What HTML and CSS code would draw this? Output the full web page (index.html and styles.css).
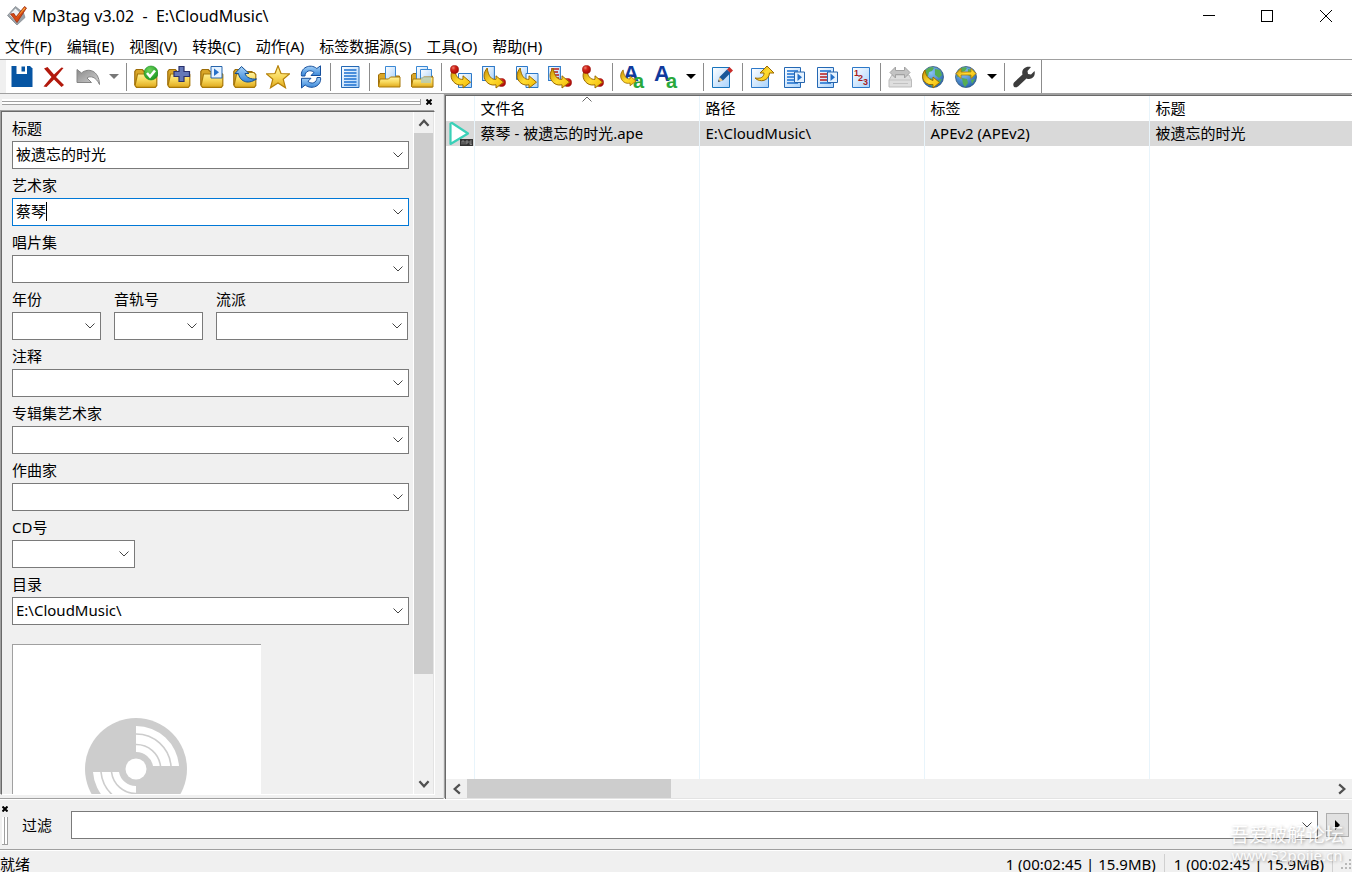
FILE: index.html
```html
<!DOCTYPE html>
<html lang="zh-CN">
<head>
<meta charset="utf-8">
<title>Mp3tag v3.02  -  E:\CloudMusic\</title>
<link rel="stylesheet" href="styles.css">
</head>
<body>
<svg class="defs" aria-hidden="true">
  <defs>
    <linearGradient id="gold" x1="0" y1="0" x2="0" y2="1"><stop offset="0" stop-color="#fff3a0"/><stop offset=".5" stop-color="#f8d95c"/><stop offset="1" stop-color="#dfa91c"/></linearGradient>
    <linearGradient id="arrowgold" x1="0" y1="0" x2="1" y2="1"><stop offset="0" stop-color="#c88f00"/><stop offset=".5" stop-color="#ffdc32"/><stop offset="1" stop-color="#f2b800"/></linearGradient>
    <linearGradient id="sky" x1="0" y1="0" x2="1" y2="1"><stop offset="0" stop-color="#fff"/><stop offset="1" stop-color="#a9d2fb"/></linearGradient>
    <linearGradient id="azure" x1="0" y1="0" x2="0" y2="1"><stop offset="0" stop-color="#a6d2f8"/><stop offset="1" stop-color="#3584d8"/></linearGradient>
    <linearGradient id="gray" x1="0" y1="0" x2="1" y2="1"><stop offset="0" stop-color="#8a8a8a"/><stop offset="1" stop-color="#d4d4d4"/></linearGradient>
    <radialGradient id="red" cx=".35" cy=".3" r=".7"><stop offset="0" stop-color="#f08070"/><stop offset=".4" stop-color="#d22418"/><stop offset="1" stop-color="#a80c08"/></radialGradient>
    <radialGradient id="green" cx=".4" cy=".3" r=".8"><stop offset="0" stop-color="#6cd45c"/><stop offset="1" stop-color="#12901a"/></radialGradient>
    <radialGradient id="ocean" cx=".4" cy=".3" r=".8"><stop offset="0" stop-color="#8ac4f4"/><stop offset="1" stop-color="#1c5aa8"/></radialGradient>
  </defs>
  <symbol id="folder" viewBox="0 0 24 24">
    <path d="M.8 20V6.500l1.500-2h6l1.800 2H19v4" fill="#d9a628" stroke="#9c6c08" stroke-width="1.200"/>
    <path d="M1 20.500 3.500 9h7l1.800-1.500H21l1.800 2V20.500l-1.500 1.800H2.500Z" fill="url(#gold)" stroke="#a87808" stroke-width="1.200"/>
  </symbol>
  <symbol id="bend" viewBox="0 0 24 24">
    <path d="M5.200 3C1 8 .8 14 6 18.200 9 20.300 11.500 20.200 14 19.800V23L21.500 17.200 14 10.800v3.500C9.500 15 6.200 11 5.200 3Z" fill="url(#arrowgold)" stroke="#9b6a00" stroke-width="1"/>
  </symbol>
  <symbol id="sheet" viewBox="0 0 12 14"><path d="M.5.5h11v13H.5Z" fill="url(#sky)" stroke="#2c78c8"/></symbol>
  <symbol id="ball" viewBox="0 0 10 10"><circle cx="5" cy="5" r="4.500" fill="url(#red)" stroke="#980c08" stroke-width=".6"/></symbol>
  <symbol id="earth" viewBox="0 0 24 24">
    <circle cx="12" cy="12" r="10.500" fill="url(#ocean)" stroke="#345878" stroke-width=".8"/>
    <path d="M4 6c4-5 8-4 9-3l-2 3-3 1-1 4-4 1ZM14 4l5 1 2 5-3 3-4-3ZM8 13l5 1 1 4-3 4-2-3ZM17 15l4-1-3 5Z" fill="#55ad53"/>
  </symbol>
</svg>

<div class="app">
  <header class="titlebar">
    <svg class="logo" viewBox="0 0 22 22" aria-hidden="true">
      <path d="M9.500 1.500 17.500 8 19 12.500 11 20 1.500 10.500Z" fill="#9aa2a8" stroke="#858a90" stroke-width=".8"/>
      <path d="M9.500 3.500 15.500 9.500 9.500 16 3.500 9.800Z" fill="#eef2f4"/>
      <path d="M4.500 9 8 8.500 10 12 18.500 1.500 20.500 3 11 17.500Z" fill="#d84a12" stroke="#9c2c10" stroke-width=".8"/>
      <path d="M10.300 13 18.500 2.600 19.500 3.200Z" fill="#ffb33c"/>
    </svg>
    <h1 class="title">Mp3tag v3.02&nbsp; -&nbsp; E:\CloudMusic\</h1>
    <div class="window-controls">
      <button aria-label="最小化"><svg viewBox="0 0 12 12"><path d="M0 5.500h12"/></svg></button>
      <button aria-label="最大化"><svg viewBox="0 0 12 12"><path d="M.5.5h11v11H.5Z"/></svg></button>
      <button aria-label="关闭"><svg viewBox="0 0 12 12"><path d="m0 0 12 12M12 0 0 12"/></svg></button>
    </div>
  </header>

  <nav class="menubar">
    <button>文件(F)</button><button>编辑(E)</button><button>视图(V)</button><button>转换(C)</button><button>动作(A)</button><button>标签数据源(S)</button><button>工具(O)</button><button>帮助(H)</button>
  </nav>

  <div class="toolbar" role="toolbar">
    <button class="tool" aria-label="保存标签"><svg viewBox="0 0 24 24"><path d="M1.500 1H20l2.500 2.500V22h-21Z" fill="#0655a3"/><path d="M6.500 1h10.500v8H6.500Z" fill="#fff"/><path d="M11.500 1.500h3.500v5h-3.500Z" fill="#0655a3"/></svg></button>
    <button class="tool" aria-label="移除标签"><svg viewBox="0 0 24 24"><path d="M1 3.500 4.500 2 11 9.500 18.500 2.500 20.500 3 13 12l8 8-2.500 2L11 14.500 3.500 22 .5 21.500 8.500 12Z" fill="#b2190c"/></svg></button>
    <button class="tool" aria-label="撤消"><svg viewBox="0 0 24 24"><path d="M1 4.500 5.500 8C12 2.500 23 5 23.500 19.500 20 11.500 14 10.500 11 13l4.500 4.500H1Z" fill="url(#gray)" stroke="#858585"/></svg></button>
    <button class="drop muted" aria-label="撤消列表"><svg viewBox="0 0 10 5"><path d="M0 0h10L5 5Z"/></svg></button>
    <span class="sep"></span>
    <button class="tool" aria-label="更改目录"><svg viewBox="0 0 24 24"><use href="#folder"/><circle cx="17" cy="8" r="7" fill="url(#green)" stroke="#168b1c" stroke-width=".6"/><path d="m13 8 3 3.500 5-6" fill="none" stroke="#fff" stroke-width="2.600"/></svg></button>
    <button class="tool" aria-label="添加目录"><svg viewBox="0 0 24 24"><use href="#folder"/><path d="M12 1.500h5v5h5.500v5H17v5h-5v-5H7v-5h5Z" fill="#6478b8" stroke="#28306c" stroke-width="1.200"/></svg></button>
    <button class="tool" aria-label="载入播放列表"><svg viewBox="0 0 24 24"><use href="#folder"/><path d="M11 1.500h11v11.500H11Z" fill="#e6f3ff" stroke="#2664ac"/><path d="M14 3.500v7.500l5-3.750Z" fill="#2470c8"/></svg></button>
    <button class="tool" aria-label="上级目录"><svg viewBox="0 0 24 24"><use href="#folder"/><path d="M8.500 1.500 2 8.500h3.500C6.500 15.500 14 20.500 23.500 14 18 14.500 13 12.500 12 8.500h4Z" fill="url(#azure)" stroke="#114c90"/></svg></button>
    <button class="tool" aria-label="收藏目录"><svg viewBox="0 0 24 24"><path d="m12 .8 3 7.700 8.500.4-6.300 5.300 2.300 8.600L12 17.900 4.500 22.800l2.300-8.600L.5 8.900 9 8.500Z" fill="url(#gold)" stroke="#b68108" stroke-width="1.200"/></svg></button>
    <button class="tool" aria-label="刷新"><svg viewBox="0 0 24 24"><g fill="url(#azure)" stroke="#164f9c"><path d="M2.500 11C1 3 11-2 17.800 3.500L21.500.8v9.700H12l3-3C11.500 4 6 6 6 11Z"/><path d="M21.500 12.500c1.500 8-8.500 13-15.300 7.500l-3.700 3v-9.700H12l-3 3c3.500 3.500 9 1.500 9-3.800Z"/></g></svg></button>
    <span class="sep"></span>
    <button class="tool" aria-label="扩展标签"><svg viewBox="0 0 24 24"><path d="M3.500 1.500h17.500v21H3.500Z" fill="url(#sky)" stroke="#2468b4"/><path d="M6 5h12.500M6 8h12.500M6 11h12.500M6 14h12.500M6 17h12.500M6 20h12.500" stroke="#1c70d0" stroke-width="1.300"/></svg></button>
    <span class="sep"></span>
    <button class="tool" aria-label="全选文件"><svg viewBox="0 0 24 24"><path d="M1.500 21V10l1.500-1.500h5L10 11h12.500v10.500H2Z" fill="#d9a628" stroke="#9c6c08"/><path d="M8.500 1.500h10V15h-10Z" fill="url(#sky)" stroke="#3a88d4"/><path d="M1.500 21.500 3 14h8.500l2-2h9.500v10H2Z" fill="url(#gold)" stroke="#a87808"/></svg></button>
    <button class="tool" aria-label="子目录"><svg viewBox="0 0 24 24"><path d="M1.500 21.500V10l1.500-1.500h5L10 11h12.500v11H2Z" fill="#d9a628" stroke="#9c6c08"/><path d="M6.500 1.500h11V15h-11Z" fill="url(#sky)" stroke="#3a88d4"/><path d="M10.500 4.500h11V17h-11Z" fill="url(#sky)" stroke="#3a88d4"/><path d="M1.500 21.500 3 14h8.500l2-2h9.500v10H2Z" fill="url(#gold)" stroke="#a87808"/><path d="M11 12h10v6H11Z" fill="#a9c8c8" fill-opacity=".7"/></svg></button>
    <span class="sep"></span>
    <button class="tool" aria-label="标签 - 文件名"><svg viewBox="0 0 24 24"><path d="M9.500 8.500h13v14h-13Z" fill="url(#sky)" stroke="#2c78c8"/><use href="#bend"/><use href="#ball" x="1" y="0" width="9" height="9"/></svg></button>
    <button class="tool" aria-label="文件名 - 标签"><svg viewBox="0 0 24 24"><use href="#sheet" x="0" y="1" width="13" height="15"/><use href="#ball" x="15" y="13" width="9" height="9"/><use href="#bend"/></svg></button>
    <button class="tool" aria-label="文件名 - 文件名"><svg viewBox="0 0 24 24"><use href="#sheet" x="1" y="1" width="12" height="14"/><path d="M11 8.500h12v14H11Z" fill="url(#sky)" stroke="#2c78c8"/><use href="#bend"/></svg></button>
    <button class="tool" aria-label="文本文件 - 标签"><svg viewBox="0 0 24 24"><use href="#sheet" x="0" y="1" width="13" height="15"/><path d="M3 4h8M3 7h7M4 10h7M4 13h7" stroke="#b91c1c" stroke-width="1.500"/><use href="#ball" x="15" y="13" width="9" height="9"/><use href="#bend"/></svg></button>
    <button class="tool" aria-label="标签 - 标签"><svg viewBox="0 0 24 24"><use href="#ball" x="14" y="13" width="9" height="9"/><use href="#bend"/><use href="#ball" x="1" y="0" width="9" height="9"/></svg></button>
    <span class="sep"></span>
    <button class="tool" aria-label="动作"><svg class="letters" viewBox="0 0 24 24"><text class="glyph-a" x="3" y="16">A</text><text class="glyph-b" x="13" y="23">a</text><use href="#bend" x="-1" y="2" width="19" height="20"/></svg></button>
    <button class="tool" aria-label="快速动作"><svg class="letters" viewBox="0 0 24 24"><text class="glyph-a" x="1" y="16">A</text><text class="glyph-b" x="13" y="23">a</text></svg></button>
    <button class="drop" aria-label="动作列表"><svg viewBox="0 0 10 5"><path d="M0 0h10L5 5Z"/></svg></button>
    <span class="sep"></span>
    <button class="tool" aria-label="编辑"><svg viewBox="0 0 24 24"><path d="M1.500 2.500h17v20h-17Z" fill="url(#sky)" stroke="#1874bc"/><path d="m7 17 1.500-5 7.500-7.500 3.500 3.500-7.500 7.500Z" fill="#185698"/><path d="m7 17 1.500-5 3.500 3.500Z" fill="#f1c88a"/><path d="m16 4.500 2.500-2.500L22 5.500 19.500 8Z" fill="#c92c28"/><path d="m7 17 .7-2 1.300 1.300Z" fill="#173354"/></svg></button>
    <span class="sep"></span>
    <button class="tool" aria-label="导出"><svg viewBox="0 0 24 24"><path d="M1.500 3.500h17v19h-17Z" fill="url(#sky)" stroke="#2c78c8"/><path d="M17 1 10 8h4c0 4-3 6-9 5 5 5 14 3 14.500-5H24Z" fill="url(#arrowgold)" stroke="#9b6a00"/></svg></button>
    <button class="tool" aria-label="播放列表（全部）"><svg viewBox="0 0 24 24"><path d="M1.500 2.500h16v20h-16Z" fill="url(#sky)" stroke="#2468b4"/><path d="M4 6h11M4 9h11M4 12h11M4 15h11M4 18h11" stroke="#1c70d0" stroke-width="1.500"/><path d="M11.500 7h10v10.500h-10Z" fill="#e6f3ff" stroke="#2664ac"/><path d="M14.500 8.500v7.500l4.500-3.750Z" fill="#2470c8"/></svg></button>
    <button class="tool" aria-label="播放列表（选中）"><svg viewBox="0 0 24 24"><path d="M1.500 2.500h16v20h-16Z" fill="url(#sky)" stroke="#2468b4"/><path d="M4 6h11M4 18h11" stroke="#1c70d0" stroke-width="1.500"/><path d="M4 9h11M4 12h11M4 15h11" stroke="#b91c1c" stroke-width="1.500"/><path d="M11.500 7h10v10.500h-10Z" fill="#e6f3ff" stroke="#2664ac"/><path d="M14.500 8.500v7.500l4.500-3.750Z" fill="#2470c8"/></svg></button>
    <button class="tool" aria-label="自动编号"><svg viewBox="0 0 24 24"><path d="M3.500 2.500h17v20h-17Z" fill="url(#sky)" stroke="#2c78c8"/><g class="glyph-n"><text x="5" y="11">1</text><text x="9" y="16">2</text><text x="14" y="20">3</text></g></svg></button>
    <span class="sep"></span>
    <button class="tool" aria-label="标签数据源"><svg viewBox="0 0 24 24"><path d="M1 15 4 10h17l2.500 5v7H1Z" fill="#dedede" stroke="#bbb"/><path d="M1 15h23M5 18.500h15" stroke="#c2c2c2"/><path d="m2 7.500 5.500-5.500v3.500h9V2L22 7.500 16.500 13V9.500h-9V13Z" fill="#c3c3c3" stroke="#a2a2a2"/></svg></button>
    <button class="tool" aria-label="网络数据源"><svg viewBox="0 0 24 24"><use href="#earth"/><path d="M4 5C0 10 1 17 8 19.500h4V23l6.500-5.500L12 12v3.500C7 14 4.500 10 4 5Z" fill="url(#arrowgold)" stroke="#9b6a00"/></svg></button>
    <button class="tool" aria-label="网络源"><svg viewBox="0 0 24 24"><use href="#earth"/><path d="m2 8.500 5-5V7h10V3.500l5 5-5 5V10H7v3.500Z" fill="url(#arrowgold)" stroke="#b57b00" stroke-width=".8"/></svg></button>
    <button class="drop" aria-label="网络源列表"><svg viewBox="0 0 10 5"><path d="M0 0h10L5 5Z"/></svg></button>
    <span class="sep"></span>
    <button class="tool" aria-label="选项"><svg viewBox="0 0 24 24"><path d="M19 2 15.500 6l.5 3 3 .5L22.500 6c1.500 6-3.500 9.500-8 7.500L6 21.500c-3.500 2.500-6-1-4-4L10.500 9.500C9 4.500 13.500.5 19 2Z" fill="#3c3c3c"/></svg></button>
    <span class="toolbar-end"></span>
  </div>

  <main class="main">
    <aside class="panel">
      <div class="panel-grip"><span class="grip"></span><button class="mini-close" aria-label="关闭标签面板"><svg viewBox="0 0 6 6"><path d="m.5.5 5 5M5.500.5l-5 5"/></svg></button></div>
      <div class="panel-frame">
        <form class="fields">
          <div class="field"><label for="f-title">标题</label><div class="combo"><input id="f-title" value="被遗忘的时光"><button type="button" aria-label="展开标题"><svg viewBox="0 0 10 6"><path d="m.5.500 4.500 4.500L9.500.500"/></svg></button></div></div>
          <div class="field"><label for="f-artist">艺术家</label><div class="combo active"><input id="f-artist" value="蔡琴"><span class="caret"></span><button type="button" aria-label="展开艺术家"><svg viewBox="0 0 10 6"><path d="m.5.500 4.500 4.500L9.500.500"/></svg></button></div></div>
          <div class="field"><label for="f-album">唱片集</label><div class="combo"><input id="f-album"><button type="button" aria-label="展开唱片集"><svg viewBox="0 0 10 6"><path d="m.5.500 4.500 4.500L9.500.500"/></svg></button></div></div>
          <div class="field-row">
            <div class="field"><label for="f-year">年份</label><div class="combo"><input id="f-year"><button type="button" aria-label="展开年份"><svg viewBox="0 0 10 6"><path d="m.5.500 4.500 4.500L9.500.500"/></svg></button></div></div>
            <div class="field"><label for="f-track">音轨号</label><div class="combo"><input id="f-track"><button type="button" aria-label="展开音轨号"><svg viewBox="0 0 10 6"><path d="m.5.500 4.500 4.500L9.500.500"/></svg></button></div></div>
            <div class="field"><label for="f-genre">流派</label><div class="combo"><input id="f-genre"><button type="button" aria-label="展开流派"><svg viewBox="0 0 10 6"><path d="m.5.500 4.500 4.500L9.500.500"/></svg></button></div></div>
          </div>
          <div class="field"><label for="f-comment">注释</label><div class="combo"><input id="f-comment"><button type="button" aria-label="展开注释"><svg viewBox="0 0 10 6"><path d="m.5.500 4.500 4.500L9.500.500"/></svg></button></div></div>
          <div class="field"><label for="f-albumartist">专辑集艺术家</label><div class="combo"><input id="f-albumartist"><button type="button" aria-label="展开专辑集艺术家"><svg viewBox="0 0 10 6"><path d="m.5.500 4.500 4.500L9.500.500"/></svg></button></div></div>
          <div class="field"><label for="f-composer">作曲家</label><div class="combo"><input id="f-composer"><button type="button" aria-label="展开作曲家"><svg viewBox="0 0 10 6"><path d="m.5.500 4.500 4.500L9.500.500"/></svg></button></div></div>
          <div class="field short"><label for="f-disc">CD号</label><div class="combo"><input id="f-disc"><button type="button" aria-label="展开CD号"><svg viewBox="0 0 10 6"><path d="m.5.500 4.500 4.500L9.500.500"/></svg></button></div></div>
          <div class="field"><label for="f-dir">目录</label><div class="combo"><input id="f-dir" value="E:\CloudMusic\"><button type="button" aria-label="展开目录"><svg viewBox="0 0 10 6"><path d="m.5.500 4.500 4.500L9.500.500"/></svg></button></div></div>
          <div class="cover">
            <svg viewBox="0 0 102 102" role="img" aria-label="封面">
              <circle cx="51" cy="51" r="51" fill="#cdcdcd"/>
              <g fill="#fff">
                <path d="M51 8A43 43 0 0 1 94 48H68A17 17 0 0 0 51 34Z"/>
                <path d="M51 94A43 43 0 0 1 8 54H34A17 17 0 0 0 51 68Z"/>
                <circle cx="51" cy="51" r="10.500"/>
              </g>
              <g fill="none" stroke="#cdcdcd" stroke-width="1.600">
                <path d="M51 16A35 35 0 0 1 86 48M51 26.500A24.500 24.500 0 0 1 75.500 48"/>
                <path d="M51 86A35 35 0 0 1 16 54M51 75.500A24.500 24.500 0 0 1 26.500 54"/>
              </g>
            </svg>
          </div>
        </form>
        <div class="vscroll">
          <button aria-label="向上滚动"><svg viewBox="0 0 10 7"><path d="m1 6 4-4.500L9 6"/></svg></button>
          <div class="vtrack"><span class="vthumb"></span></div>
          <button aria-label="向下滚动"><svg viewBox="0 0 10 7"><path d="m1 1 4 4.500L9 1"/></svg></button>
        </div>
      </div>
    </aside>

    <section class="list">
      <table class="files">
        <colgroup><col class="c-icon"><col class="c-text"><col class="c-text"><col class="c-text"><col></colgroup>
        <thead><tr><th></th><th class="sorted">文件名<svg class="sort" viewBox="0 0 10 6"><path d="M.5 5.500 5 1l4.500 4.500"/></svg></th><th>路径</th><th>标签</th><th>标题</th></tr></thead>
        <tbody>
          <tr class="selected"><td class="icon-cell"><svg class="file-icon" viewBox="0 0 25 25" aria-hidden="true"><path d="M2.500 2.500v20.500L20 12.500 4 2Z" fill="#fff" stroke="#3ad0b8" stroke-width="2.200" stroke-linejoin="round"/><path d="M12 18h13v7H12Z" fill="#333"/><path d="M14 23.500v-3.500h2v3.500M18 23.500V20h2v2h-2M24 20h-2v3.500h2M22 22h2" fill="none" stroke="#999" stroke-width=".8"/></svg></td><td>蔡琴 - 被遗忘的时光.ape</td><td>E:\CloudMusic\</td><td>APEv2 (APEv2)</td><td>被遗忘的时光</td></tr>
          <tr class="rest"><td></td><td></td><td></td><td></td><td></td></tr>
        </tbody>
      </table>
      <div class="hscroll">
        <button aria-label="向左滚动"><svg viewBox="0 0 7 10"><path d="M6 1 1.500 5 6 9"/></svg></button>
        <div class="htrack"><span class="hthumb"></span></div>
        <button aria-label="向右滚动"><svg viewBox="0 0 7 10"><path d="m1 1 4.500 4L1 9"/></svg></button>
      </div>
    </section>
  </main>

  <div class="filterbar">
    <div class="filter-grip"><button class="mini-close" aria-label="关闭过滤栏"><svg viewBox="0 0 6 6"><path d="m.5.5 5 5M5.500.5l-5 5"/></svg></button><span class="grip-v"></span></div>
    <label for="filter">过滤</label>
    <div class="combo"><input id="filter"><button type="button" aria-label="展开过滤"><svg viewBox="0 0 10 6"><path d="m.5.500 4.500 4.500L9.500.500"/></svg></button></div>
    <button class="go" aria-label="过滤选项"><svg viewBox="0 0 5 10"><path d="M0 0v10l5-5Z"/></svg></button>
  </div>

  <footer class="status">
    <span class="ready">就绪</span><span class="stat">1 (00:02:45 | 15.9MB)</span><span class="stat">1 (00:02:45 | 15.9MB)</span>
    <svg class="sizer" viewBox="0 0 12 12"><path d="M9 1h2v2H9ZM5 5h2v2H5ZM9 5h2v2H9ZM1 9h2v2H1ZM5 9h2v2H5ZM9 9h2v2H9Z"/></svg>
  </footer>
  <div class="watermark"><span class="wm-name">吾爱破解论坛</span><span class="wm-site">www.52pojie.cn</span></div>
</div>
</body>
</html>
```
FILE: styles.css
```css
* { box-sizing: border-box; }
body {
  margin: 0;
  background: #fff;
  color: #000;
  font: 15px/20px "Noto Sans", "Noto Sans CJK SC", sans-serif;
}
button, input { font: inherit; color: inherit; }
button {
  display: flex;
  align-items: center;
  justify-content: center;
  padding: 0;
  border: 0;
  background: none;
}
svg { display: block; flex: none; }
.defs { position: absolute; width: 0; height: 0; }
.app { display: flex; flex-direction: column; height: 100vh; overflow: hidden; position: relative; }

.titlebar { display: flex; align-items: center; height: 31px; padding-left: 6px; }
.logo { width: 22px; height: 22px; }
.title { flex: 1; margin: 0 0 0 4px; font-size: 16px; font-weight: 400; }
.window-controls { display: flex; }
.window-controls button { width: 58px; height: 31px; }
.window-controls button:last-child { width: 56px; padding-left: 4px; }
.window-controls svg { width: 12px; height: 12px; fill: none; stroke: #000; shape-rendering: crispEdges; }
.window-controls button:last-child svg { shape-rendering: auto; }

.menubar { display: flex; gap: 15px; height: 28px; padding: 2px 5px 0; }
.menubar button { white-space: nowrap; }

.toolbar {
  display: flex;
  align-items: center;
  height: 35px;
  padding-left: 5px;
  border-top: 1px solid #a0a0a0;
  border-bottom: 1px solid #a0a0a0;
  background: linear-gradient(90deg, #f0f0f0 6px, #fff 6px);
}
.tool { width: 33px; height: 33px; }
.tool svg { width: 24px; height: 24px; }
.drop { width: 19px; height: 33px; }
.drop svg { width: 10px; height: 5px; }
.drop.muted svg { fill: #777; }
.sep { width: 6px; height: 28px; background: linear-gradient(#8c8c8c, #8c8c8c) 3px 0 / 1px 100% no-repeat; }
.toolbar-end { width: 2px; height: 33px; border-right: 1px solid #8c8c8c; }
.tool .letters { overflow: visible; }
.glyph-a { font: 700 22px "Liberation Sans", sans-serif; fill: #103a9c; }
.glyph-b { font: 700 20px "Liberation Sans", sans-serif; fill: #2aa83c; }
.glyph-n { font: 700 9px "Liberation Sans", sans-serif; fill: #a81c1c; }

.main { display: flex; flex: 1; min-height: 0; background: #f0f0f0; }
.panel { display: flex; flex-direction: column; width: 444px; padding: 5px 8px 3px 1px; border-right: 1px solid #e3e3e3; border-bottom: 1px solid #a0a0a0; }
.panel-grip { display: flex; align-items: flex-start; gap: 5px; height: 12px; padding: 0 3px 0 1px; }
.grip { flex: 1; height: 6px; border-right: 1px solid #a0a0a0; background: repeating-linear-gradient(#fff 0 2px, #a0a0a0 2px 3px); }
.mini-close svg { width: 6px; height: 6px; fill: none; stroke: #000; stroke-width: 2; }
.panel-frame {
  display: flex;
  flex: 1;
  min-height: 0;
  border: 1px solid;
  border-color: #696969 #fff #fff #696969;
  box-shadow: -1px -1px #a0a0a0;
}
.fields { flex: 1; min-width: 0; overflow: hidden; padding: 6px 4px 0 10px; }
.field { display: flex; flex-direction: column; gap: 3px; margin-bottom: 6px; }
.field-row { display: flex; gap: 13px; padding-right: 1px; }
.field-row .field { width: 89px; }
.field-row .field:last-child { flex: 1; }
.field.short { width: 123px; }
.combo { display: flex; position: relative; height: 28px; border: 1px solid #7a7a7a; background: #fff; }
.combo.active { border-color: #0078d7; }
.combo input { flex: 1; width: 0; min-width: 0; padding: 0 0 2px 3px; border: 0; outline: 0; background: none; }
.combo button { width: 20px; }
.combo svg { width: 10px; height: 6px; fill: none; stroke: #444; }
.caret { position: absolute; left: 33px; top: 3px; width: 1px; height: 19px; background: #000; }
.cover {
  display: flex;
  align-items: center;
  justify-content: center;
  width: 249px;
  height: 249px;
  margin-top: 19px;
  padding-right: 2px;
  border-top: 1px solid #a0a0a0;
  border-left: 1px solid #a0a0a0;
  background: #fff;
}
.cover svg { width: 102px; height: 102px; }
.vscroll { display: flex; flex-direction: column; width: 21px; border-left: 1px solid #fff; border-right: 1px solid #e3e3e3; }
.vscroll button { height: 21px; }
.vscroll svg { width: 12px; height: 8px; fill: none; stroke: #505050; stroke-width: 2; }
.vtrack { flex: 1; }
.vthumb { display: block; height: 84.5%; background: #cdcdcd; }

.list {
  display: flex;
  flex: 1;
  flex-direction: column;
  min-width: 0;
  margin: 1px 0 0 1px;
  border-left: 1px solid #696969;
  border-top: 1px solid #696969;
  box-shadow: -1px -1px #a0a0a0;
  background: #fff;
}
.files { flex: 1; width: 100%; height: 100%; border-collapse: collapse; table-layout: fixed; }
.c-icon { width: 28px; }
.c-text { width: 225px; }
.files th, .files td { height: 25px; padding: 0 0 2px 6px; border-right: 1px solid #e8f4fb; font-weight: 400; text-align: left; white-space: nowrap; overflow: hidden; }
.files th:last-child, .files td:last-child { border-right: 0; }
.files .sorted { position: relative; }
.sort { position: absolute; top: 0; left: 107px; width: 10px; height: 6px; fill: none; stroke: #666; }
.selected { background: #d9d9d9; }
.files .icon-cell { padding: 0 0 0 2px; }
.file-icon { width: 25px; height: 25px; }
.files .rest td { height: auto; }
.hscroll { display: flex; height: 20px; background: #f0f0f0; border-bottom: 1px solid #e3e3e3; }
.hscroll button { width: 21px; }
.hscroll button svg { width: 8px; height: 12px; fill: none; stroke: #505050; stroke-width: 2; }
.htrack { flex: 1; }
.hthumb { display: block; width: 23.6%; height: 100%; background: #cdcdcd; }

.filterbar { display: flex; align-items: center; height: 51px; padding-right: 3px; border-top: 1px solid #fff; border-bottom: 1px solid #a0a0a0; background: #f0f0f0; }
.filter-grip { display: flex; flex-direction: column; gap: 5px; width: 22px; padding: 2px 0 0 2px; }
.filter-grip .mini-close { width: 6px; }
.grip-v { width: 6px; height: 28px; border-bottom: 1px solid #a0a0a0; background: repeating-linear-gradient(90deg, #fff 0 2px, #a0a0a0 2px 3px); }
.filterbar label { width: 49px; }
.filterbar .combo { flex: 1; }
.go { width: 23px; height: 24px; margin-left: 8px; border: 1px solid #adadad; background: #e1e1e1; }
.go svg { width: 5px; height: 10px; }

.status { display: flex; align-items: center; height: 22px; padding-top: 4px; border-top: 1px solid #fff; background: #f0f0f0; }
.ready { flex: 1; }
.stat { padding: 0 8px 0 9px; border-right: 1px solid #d0d0d0; white-space: nowrap; }
.sizer { width: 12px; height: 12px; margin-left: 7px; fill: #b8b8b8; }

.watermark {
  position: absolute;
  right: 8px;
  bottom: 7px;
  display: flex;
  flex-direction: column;
  align-items: center;
  color: #fff;
  opacity: .8;
  text-shadow: 1px 1px 3px rgba(0, 0, 0, .4);
  pointer-events: none;
}
.wm-name { font-size: 19px; }
.wm-site { font-size: 15px; }
```
